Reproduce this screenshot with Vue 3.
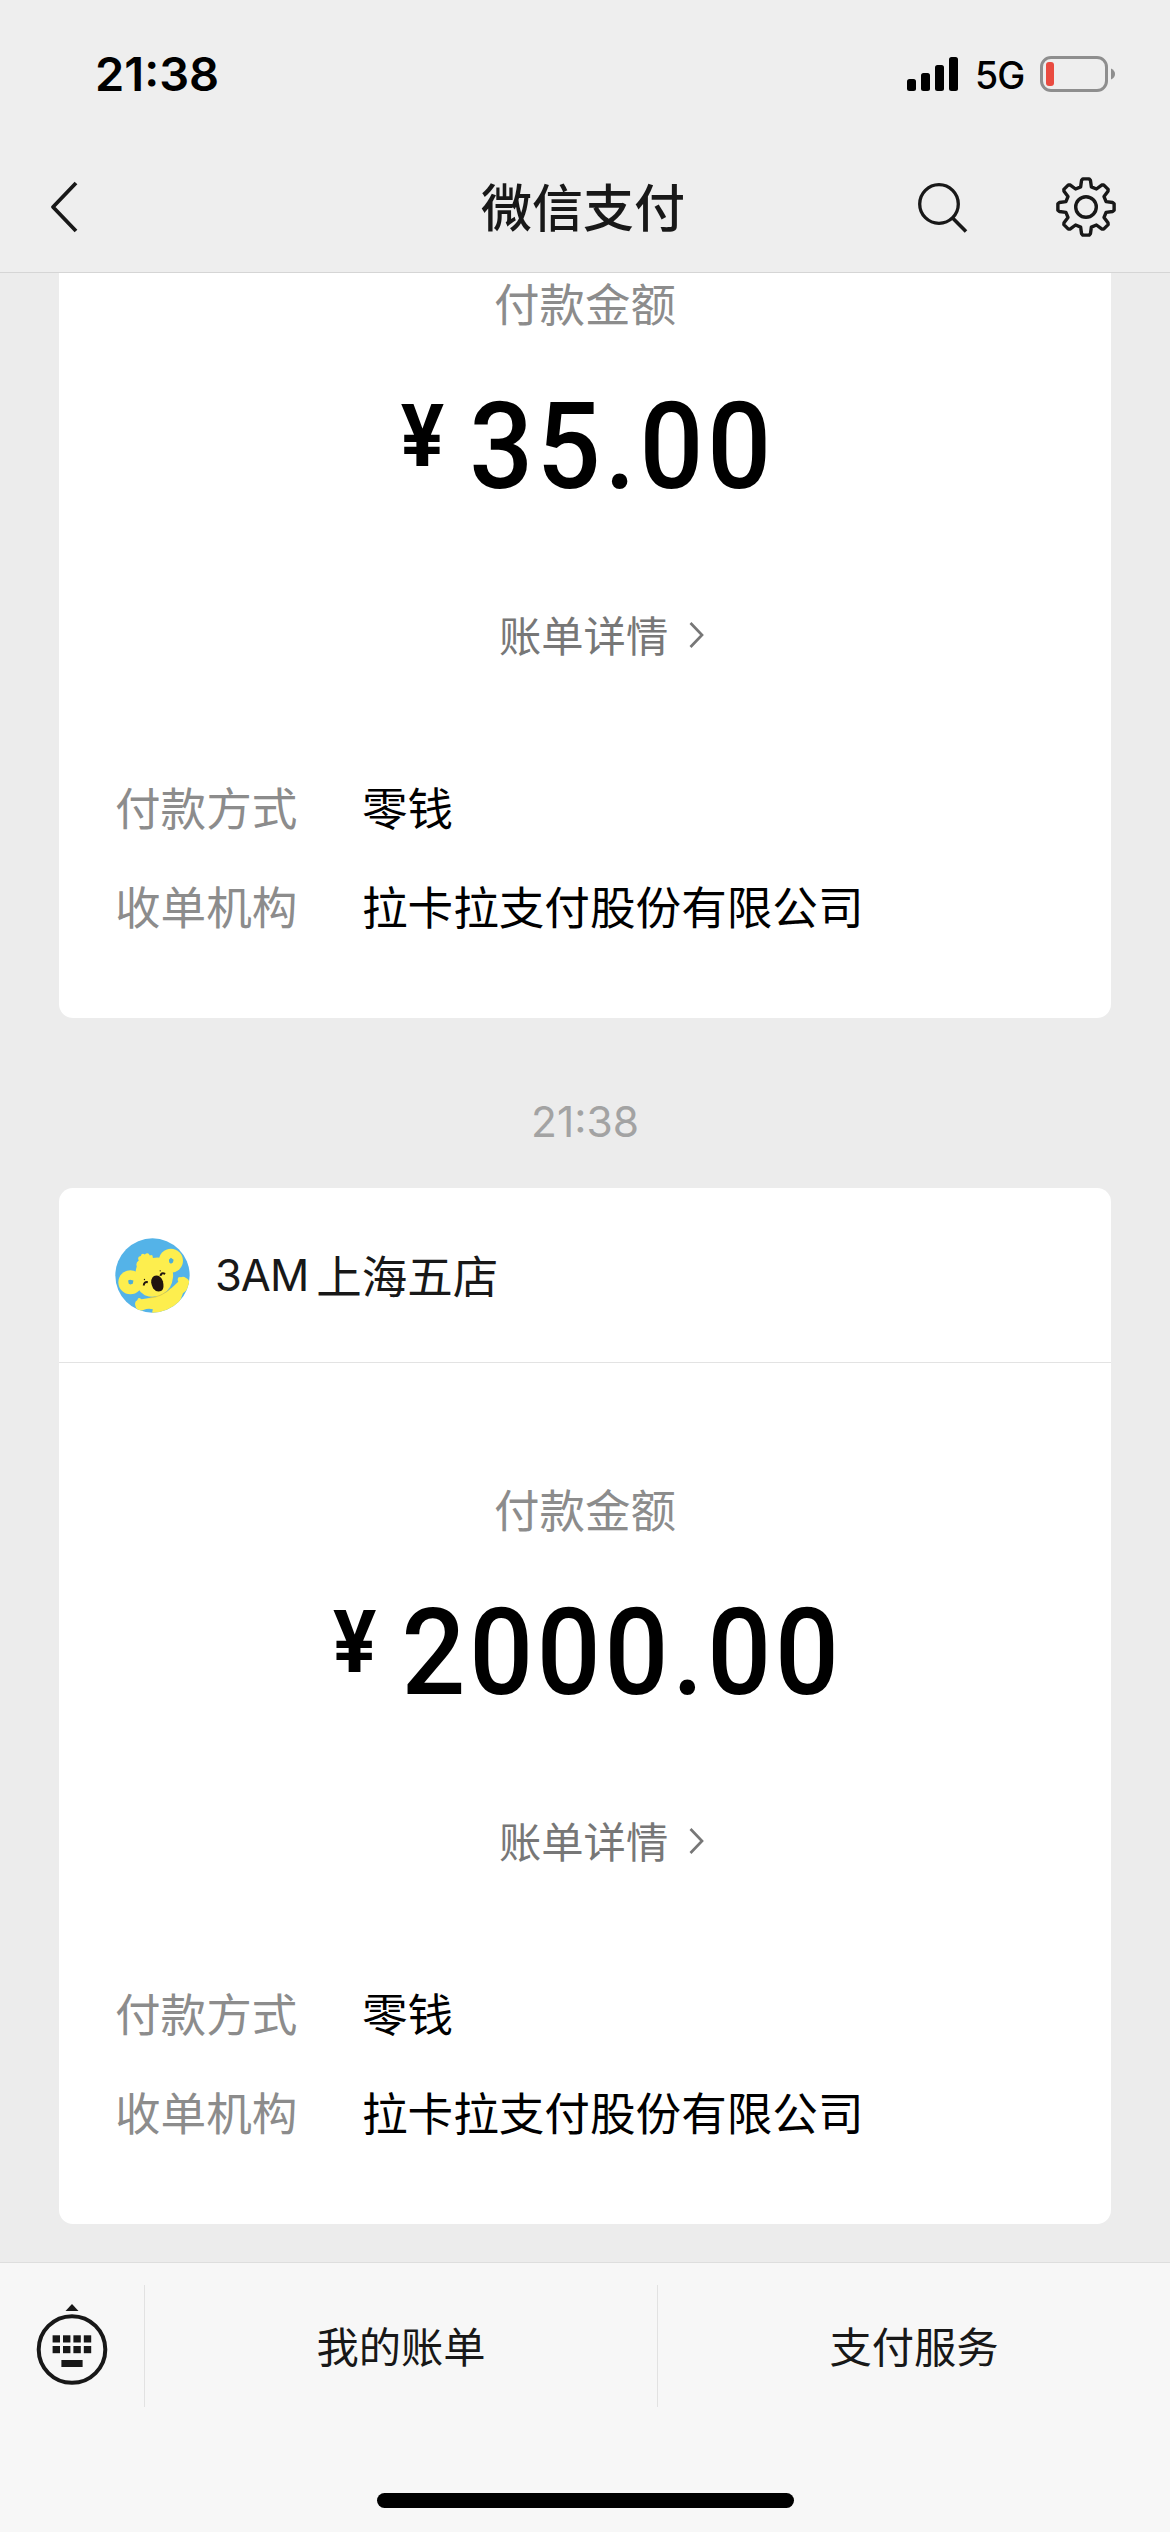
<script setup>
const payments = [
  { time: '', shop: '', amount: '35.00', method: '零钱', acquirer: '拉卡拉支付股份有限公司' },
  { time: '21:38', shop: '3AM', branch: '上海五店', amount: '2000.00', method: '零钱', acquirer: '拉卡拉支付股份有限公司' },
]

// Outline of the eight-tooth settings gear, centred on 0,0
const polar = (r, deg) => {
  const a = (deg * Math.PI) / 180
  return `${(r * Math.cos(a)).toFixed(2)} ${(r * Math.sin(a)).toFixed(2)}`
}
const gear = 'M' + Array.from({ length: 8 }, (_, i) => {
  const a = i * 45
  return [polar(20.8, a - 15), polar(27, a - 9.5), polar(28.3, a - 6.5), polar(28.3, a + 6.5), polar(27, a + 9.5), polar(20.8, a + 15)].join('L')
}).join('L') + 'Z'
</script>

<template>
  <div class="screen">
    <header class="top">
      <div class="status">
        <span class="clock">21:38</span>
        <div class="signals">
          <svg class="bars" width="51" height="34" viewBox="0 0 51 34">
            <rect x="0" y="22" width="9" height="12" rx="2.5" />
            <rect x="14" y="16" width="9" height="18" rx="2.5" />
            <rect x="28" y="8" width="9" height="26" rx="2.5" />
            <rect x="42" y="0" width="9" height="34" rx="2.5" />
          </svg>
          <span class="net">5G</span>
          <svg width="76" height="36" viewBox="0 0 76 36">
            <rect x="1.5" y="1.5" width="65" height="33" rx="9.5" fill="none" stroke="#8e8e8e" stroke-width="3" />
            <rect x="6" y="6" width="8" height="24" rx="3" fill="#e94b40" />
            <path d="M71 12.5Q75 14.5 75 18T71 23.5Z" fill="#8e8e8e" />
          </svg>
        </div>
      </div>
      <nav class="nav">
        <svg class="back" width="30" height="52" viewBox="0 0 30 52" fill="none" stroke="#181818" stroke-width="3.8">
          <path d="M27 2L4 26L27 50" stroke-linejoin="round" />
        </svg>
        <h1>微信支付</h1>
        <div class="tools">
          <svg width="50" height="60" viewBox="0 0 50 60" fill="none" stroke="#181818" stroke-width="3.3">
            <circle cx="21" cy="27" r="19.3" />
            <path d="M34.6 41L48 54.6" stroke-width="3.6" />
          </svg>
          <svg width="62" height="62" viewBox="-31 -31 62 62" fill="none" stroke="#181818" stroke-width="3.4" stroke-linejoin="round">
            <path :d="gear" />
            <circle r="10.3" />
          </svg>
        </div>
      </nav>
    </header>

    <main class="feed">
      <template v-for="p in payments" :key="p.amount">
        <div v-if="p.time" class="stamp">{{ p.time }}</div>
        <article class="card" :class="{ cut: !p.shop }">
          <div v-if="p.shop" class="shop">
            <svg class="avatar" viewBox="47 53 224 224">
              <defs><clipPath id="disc"><circle cx="159" cy="165" r="111" /></clipPath></defs>
              <g clip-path="url(#disc)">
                <rect x="47" y="53" width="224" height="224" fill="#54b3e8" />
                <g fill="#fdee4e">
                  <circle cx="93" cy="185" r="36" />
                  <circle cx="214" cy="121" r="36" />
                  <path d="M112 138Q108 126 118 120Q112 108 124 107Q126 97 136 102Q146 94 151 105Q161 101 160 113Q186 106 204 125Q224 146 220 172Q217 205 190 220Q164 235 136 224Q108 206 107 176Q107 152 112 138Z" />
                  <path d="M150 232Q190 226 216 202L236 184Q230 168 244 170Q252 166 258 172Q272 178 268 194Q264 208 250 218L238 250L226 285H156L160 266Q146 262 132 268Q112 274 108 256Q104 242 114 238Q116 228 126 236Z" />
                </g>
                <path d="M150 232Q186 230 214 202" fill="none" stroke="#e4c63b" stroke-width="2" />
                <path d="M86 180L92 178L102 180L100 190L93 192L88 190Z" fill="#4aaed8" />
                <path d="M208 118L214 112L222 118L220 126L214 130L209 126Z" fill="#4aaed8" />
                <path d="M155 186Q155 166 170 165Q184 165 190 182Q195 202 187 210Q172 218 161 204Q156 194 155 186Z" fill="#21150f" />
                <path d="M133 195Q133 183 145 185M183 166Q184 155 197 160" fill="none" stroke="#21150f" stroke-width="6" />
                <circle cx="135" cy="177" r="2" fill="#21150f" />
                <circle cx="182" cy="151" r="2" fill="#21150f" />
              </g>
            </svg>
            <span class="latin">{{ p.shop }}</span><span class="branch">{{ p.branch }}</span>
          </div>
          <div class="caption">付款金额</div>
          <div class="amount"><span class="yen">¥</span><span class="sum">{{ p.amount }}</span></div>
          <div class="detail">
            <span>账单详情</span>
            <svg width="16" height="28" viewBox="0 0 16 28" fill="none" stroke="#777" stroke-width="2.7"><path d="M1.5 2L13 14L1.5 26" /></svg>
          </div>
          <dl>
            <div class="row"><dt>付款方式</dt><dd>{{ p.method }}</dd></div>
            <div class="row"><dt>收单机构</dt><dd>{{ p.acquirer }}</dd></div>
          </dl>
        </article>
      </template>
    </main>

    <footer class="bottom">
      <div class="menu">
        <div class="keys">
          <svg width="72" height="82" viewBox="0 0 72 82" fill="#181818">
            <path d="M36 0L42.5 7H29.5Z" />
            <circle cx="36" cy="45.5" r="33.3" fill="none" stroke="#181818" stroke-width="4" />
            <template v-for="c in 4" :key="c">
              <rect :x="6.2 + c * 10.4" y="31.3" width="7.4" height="7.2" />
              <rect :x="6.2 + c * 10.4" y="42" width="7.4" height="7.2" />
            </template>
            <rect x="25.4" y="56" width="21.2" height="7" />
          </svg>
        </div>
        <div class="item">我的账单</div>
        <div class="item">支付服务</div>
      </div>
      <div class="home"></div>
    </footer>
  </div>
</template>

<style>
body {
  margin: 0;
  background: #ececec;
}
</style>

<style scoped>
.screen {
  width: 1170px;
  height: 2532px;
  display: flex;
  flex-direction: column;
  overflow: hidden;
  background: #ececec;
  color: #181818;
  font-family: "Noto Sans CJK SC", sans-serif;
}
.top {
  height: 272px;
  flex: none;
  background: #eee;
  border-bottom: 1px solid #d5d5d5;
}
.status {
  height: 148px;
  display: flex;
  justify-content: space-between;
  padding: 0 54px 0 95px;
  box-sizing: border-box;
  color: #000;
  font-family: Inter, sans-serif;
}
.clock {
  margin-top: 44px;
  line-height: 60px;
  font-size: 47px;
  font-weight: 600;
}
.signals {
  height: 148px;
  display: flex;
  align-items: center;
}
.bars {
  margin-right: 17px;
}
.net {
  width: 65px;
  margin-top: 3px;
  font-size: 37.5px;
  font-weight: 500;
  letter-spacing: -1px;
}
.nav {
  height: 118px;
  display: grid;
  grid-template-columns: 1fr auto 1fr;
  align-items: center;
  padding: 0 53px 0 49px;
}
h1 {
  margin: 0 0 4px;
  font-size: 51px;
  line-height: 60px;
  font-weight: 500;
}
.tools {
  display: flex;
  justify-content: flex-end;
  align-items: center;
  gap: 87px;
}
.feed {
  flex: none;
  height: 1989px;
  padding: 0 59px;
}
.card {
  display: flex;
  flex-direction: column;
  background: #fff;
  border-radius: 14px;
  padding-bottom: 83px;
}
.card.cut {
  border-radius: 0 0 14px 14px;
}
.stamp {
  height: 170px;
  line-height: 208px;
  text-align: center;
  color: #a3a3a3;
  font-family: Inter, sans-serif;
  font-size: 42.5px;
}
.shop {
  height: 174px;
  display: flex;
  align-items: center;
  padding-left: 56px;
  margin-bottom: 116px;
  border-bottom: 1px solid #e3e3e3;
  font-size: 45.5px;
}
.avatar {
  width: 75px;
  height: 75px;
  margin-right: 25px;
}
.latin {
  font-family: Inter, sans-serif;
  font-size: 43.5px;
  letter-spacing: -1px;
  margin-right: 8px;
}
.branch {
  margin-bottom: 3px;
}
.caption {
  line-height: 58px;
  font-size: 45.5px;
  color: #8c8c8c;
  text-align: center;
}
.amount {
  display: flex;
  justify-content: center;
  height: 120px;
  margin-top: 56px;
  color: #000;
  font-family: Roboto, sans-serif;
  transform: scaleX(0.93);
}
.yen {
  font-size: 87px;
  font-weight: 700;
  line-height: 98px;
  margin-right: 27px;
}
.sum {
  font-size: 121px;
  font-weight: 500;
  line-height: 120px;
  letter-spacing: 4px;
  margin-right: -6px;
}
.detail {
  display: flex;
  align-items: center;
  gap: 21px;
  margin-top: 98px;
  padding-left: 440px;
  height: 60px;
  font-size: 42.3px;
  line-height: 58px;
  color: #777;
}
.detail span {
  margin-bottom: 2px;
}
dl {
  display: flex;
  flex-direction: column;
  gap: 39px;
  margin: 111px 0 0;
  padding-left: 56px;
}
.row {
  display: flex;
  font-size: 45.6px;
  line-height: 60px;
}
dt {
  width: 247px;
  color: #8c8c8c;
}
dd {
  margin: 0;
  color: #000;
}
.bottom {
  flex: none;
  height: 269px;
  border-top: 1px solid #dedede;
  background: #f7f7f7;
}
.menu {
  display: flex;
  height: 122px;
  margin-top: 22px;
}
.keys {
  width: 144px;
  padding: 19px 0 0 36px;
  box-sizing: border-box;
}
.item {
  flex: 1;
  border-left: 1px solid #e2e2e2;
  text-align: center;
  font-size: 42.3px;
  line-height: 119px;
}
.home {
  width: 417px;
  height: 15px;
  margin: 86px auto 0;
  border-radius: 8px;
  background: #000;
}
</style>
